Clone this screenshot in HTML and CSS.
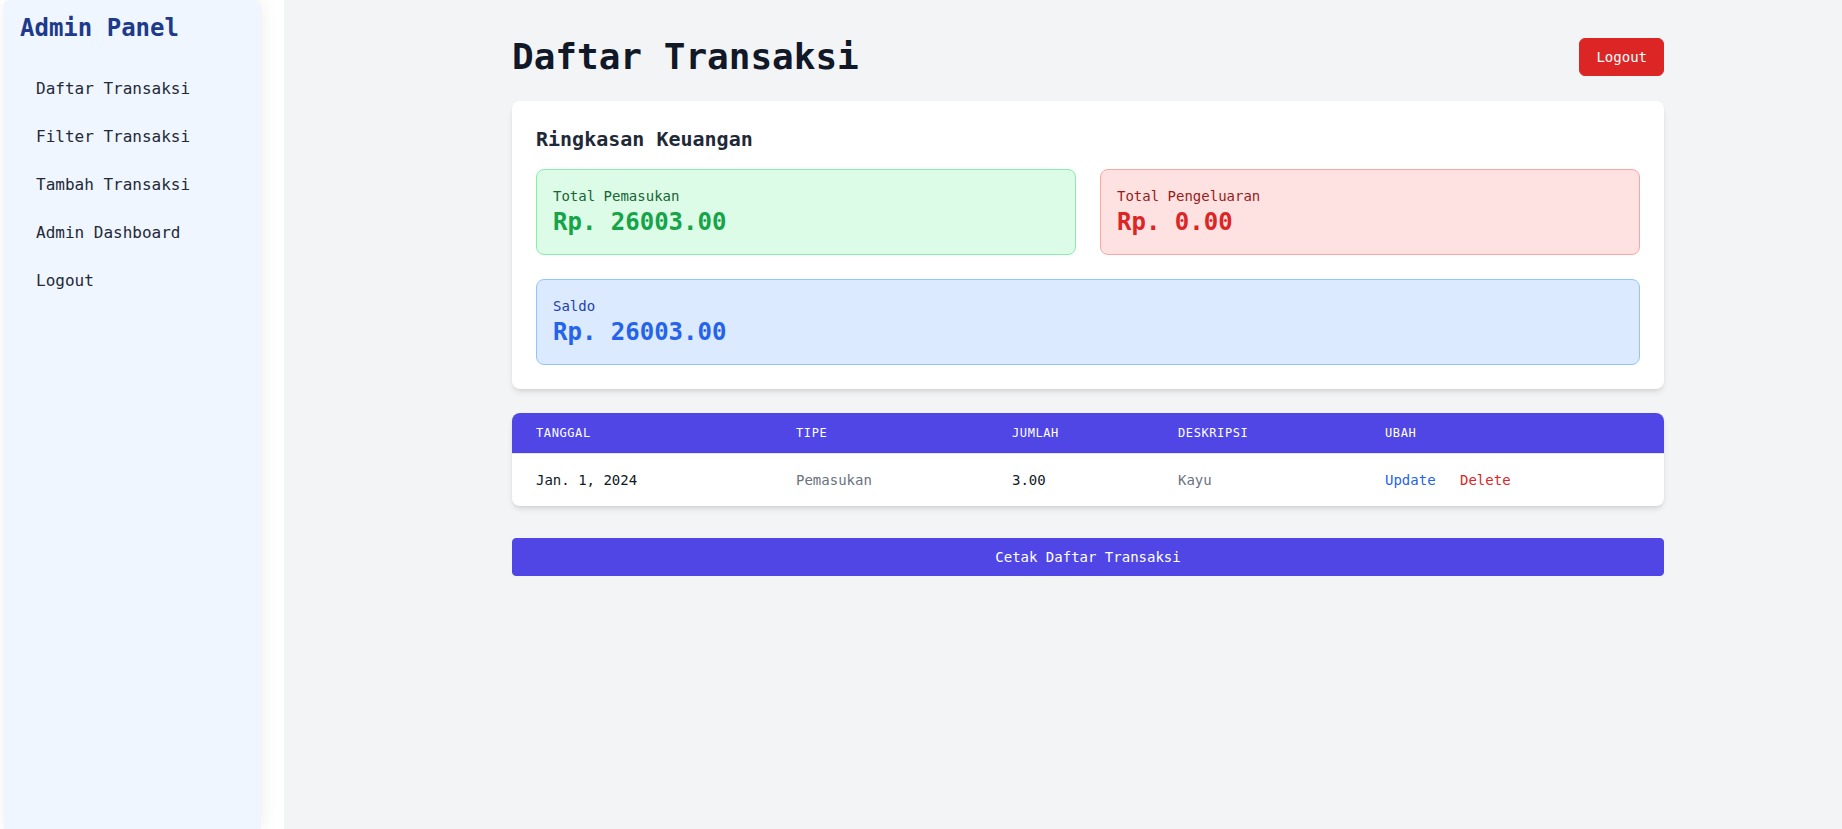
FILE: index.html
```html
<!DOCTYPE html>
<html lang="id">
<head>
<meta charset="utf-8">
<title>Daftar Transaksi</title>
<link rel="stylesheet" href="styles.css">
</head>
<body>
<div class="layout">
  <div class="aside-wrap">
    <aside class="sidebar">
      <h2 class="brand">Admin Panel</h2>
      <nav class="nav">
        <a class="nav-item" href="#">Daftar Transaksi</a>
        <a class="nav-item" href="#">Filter Transaksi</a>
        <a class="nav-item" href="#">Tambah Transaksi</a>
        <a class="nav-item" href="#">Admin Dashboard</a>
        <a class="nav-item" href="#">Logout</a>
      </nav>
    </aside>
  </div>
  <main class="main">
    <div class="container">
      <div class="top-row">
        <h1 class="title">Daftar Transaksi</h1>
        <button class="btn-logout">Logout</button>
      </div>

      <section class="card summary">
        <h3 class="summary-title">Ringkasan Keuangan</h3>
        <div class="summary-grid">
          <div class="stat stat-green">
            <div class="stat-label">Total Pemasukan</div>
            <div class="stat-value">Rp. 26003.00</div>
          </div>
          <div class="stat stat-red">
            <div class="stat-label">Total Pengeluaran</div>
            <div class="stat-value">Rp. 0.00</div>
          </div>
          <div class="stat stat-blue stat-wide">
            <div class="stat-label">Saldo</div>
            <div class="stat-value">Rp. 26003.00</div>
          </div>
        </div>
      </section>

      <div class="table-wrap">
        <table class="table">
          <colgroup>
            <col class="c1"><col class="c2"><col class="c3"><col class="c4"><col class="c5">
          </colgroup>
          <thead>
            <tr>
              <th>Tanggal</th>
              <th>Tipe</th>
              <th>Jumlah</th>
              <th>Deskripsi</th>
              <th>Ubah</th>
            </tr>
          </thead>
          <tbody>
            <tr>
              <td class="dark">Jan. 1, 2024</td>
              <td class="muted">Pemasukan</td>
              <td class="dark">3.00</td>
              <td class="muted">Kayu</td>
              <td><a class="link-update" href="#">Update</a> <a class="link-delete" href="#">Delete</a></td>
            </tr>
          </tbody>
        </table>
      </div>

      <button class="btn-print">Cetak Daftar Transaksi</button>
    </div>
  </main>
</div>
</body>
</html>
```

FILE: styles.css
```css
* { box-sizing: border-box; }

html, body {
  margin: 0;
  padding: 0;
  height: 100%;
}

body {
  font-family: "DejaVu Sans Mono", "Liberation Mono", monospace;
  background: #ffffff;
  color: #111827;
  overflow: hidden;
}

.layout {
  display: flex;
  min-height: 100vh;
}

.aside-wrap {
  width: 284px;
  flex: 0 0 284px;
  background: #ffffff;
  padding-left: 4px;
  display: flex;
}

.sidebar {
  width: 256px;
  min-height: 100vh;
  background: #eff6ff;
  border-radius: 8px 8px 0 0;
  box-shadow: 2px 0 18px rgba(0, 0, 0, 0.07), 0 0 2px rgba(0, 0, 0, 0.06);
  padding: 12px 16px 16px 16px;
}

.brand {
  margin: 0 0 21px 0;
  font-size: 24px;
  line-height: 32px;
  font-weight: 700;
  color: #1e3a8a;
}

.nav {
  display: flex;
  flex-direction: column;
}

.nav-item {
  display: block;
  padding: 12px 16px;
  font-size: 16px;
  line-height: 24px;
  color: #1f2937;
  text-decoration: none;
  border-radius: 6px;
}

.main {
  flex: 1;
  background: #f3f4f6;
  padding: 37px 32px 32px 82px;
}

.container {
  max-width: 1152px;
  margin: 0 auto;
}

.top-row {
  display: flex;
  justify-content: space-between;
  align-items: flex-start;
  margin-bottom: 24px;
}

.title {
  margin: 0;
  font-size: 36px;
  line-height: 40px;
  font-weight: 700;
  color: #111827;
}

.btn-logout {
  font-family: inherit;
  font-size: 14px;
  line-height: 20px;
  padding: 8px 16px;
  border: 1px solid #dc2626;
  background: #dc2626;
  color: #ffffff;
  border-radius: 6px;
  margin-top: 1px;
  cursor: pointer;
}

.card {
  background: #ffffff;
  border-radius: 8px;
  box-shadow: 0 4px 6px -1px rgba(0, 0, 0, 0.1), 0 2px 4px -2px rgba(0, 0, 0, 0.1);
}

.summary {
  padding: 24px;
  margin-bottom: 24px;
}

.summary-title {
  margin: 0 0 16px 0;
  font-size: 20px;
  line-height: 28px;
  font-weight: 700;
  color: #1f2937;
}

.summary-grid {
  display: grid;
  grid-template-columns: 1fr 1fr;
  gap: 24px;
}

.stat {
  border: 1px solid;
  border-radius: 8px;
  padding: 16px;
}

.stat-wide { grid-column: span 2; }

.stat-label {
  font-size: 14px;
  line-height: 20px;
}

.stat-value {
  font-size: 24px;
  line-height: 32px;
  font-weight: 700;
}

.stat-green { background: #dcfce7; border-color: #86efac; }
.stat-green .stat-label { color: #166534; }
.stat-green .stat-value { color: #16a34a; }

.stat-red { background: #fee2e2; border-color: #fca5a5; }
.stat-red .stat-label { color: #991b1b; }
.stat-red .stat-value { color: #dc2626; }

.stat-blue { background: #dbeafe; border-color: #93c5fd; }
.stat-blue .stat-label { color: #1e40af; }
.stat-blue .stat-value { color: #2563eb; }

.table-wrap {
  background: #ffffff;
  border-radius: 8px;
  overflow: hidden;
  box-shadow: 0 4px 6px -1px rgba(0, 0, 0, 0.1), 0 2px 4px -2px rgba(0, 0, 0, 0.1);
  margin-bottom: 32px;
}

.table {
  width: 100%;
  border-collapse: collapse;
  table-layout: fixed;
}

.c1 { width: 260px; }
.c2 { width: 216px; }
.c3 { width: 166px; }
.c4 { width: 207px; }
.c5 { width: 303px; }

.table th {
  background: #4f46e5;
  color: #ffffff;
  text-align: left;
  font-weight: 500;
  font-size: 12px;
  line-height: 16px;
  letter-spacing: 0.05em;
  text-transform: uppercase;
  padding: 12px 24px;
}

.table td {
  font-size: 14px;
  line-height: 20px;
  padding: 16px 24px;
  border-top: 1px solid #e5e7eb;
  white-space: nowrap;
}

.dark { color: #111827; }
.muted { color: #6b7280; }

.link-update {
  color: #2563eb;
  text-decoration: none;
  margin-right: 16px;
}

.link-delete {
  color: #dc2626;
  text-decoration: none;
}

.btn-print {
  display: block;
  width: 100%;
  font-family: inherit;
  font-size: 14px;
  line-height: 20px;
  padding: 8px 16px;
  border: 1px solid #4f46e5;
  background: #4f46e5;
  color: #ffffff;
  border-radius: 4px;
  cursor: pointer;
}
```
